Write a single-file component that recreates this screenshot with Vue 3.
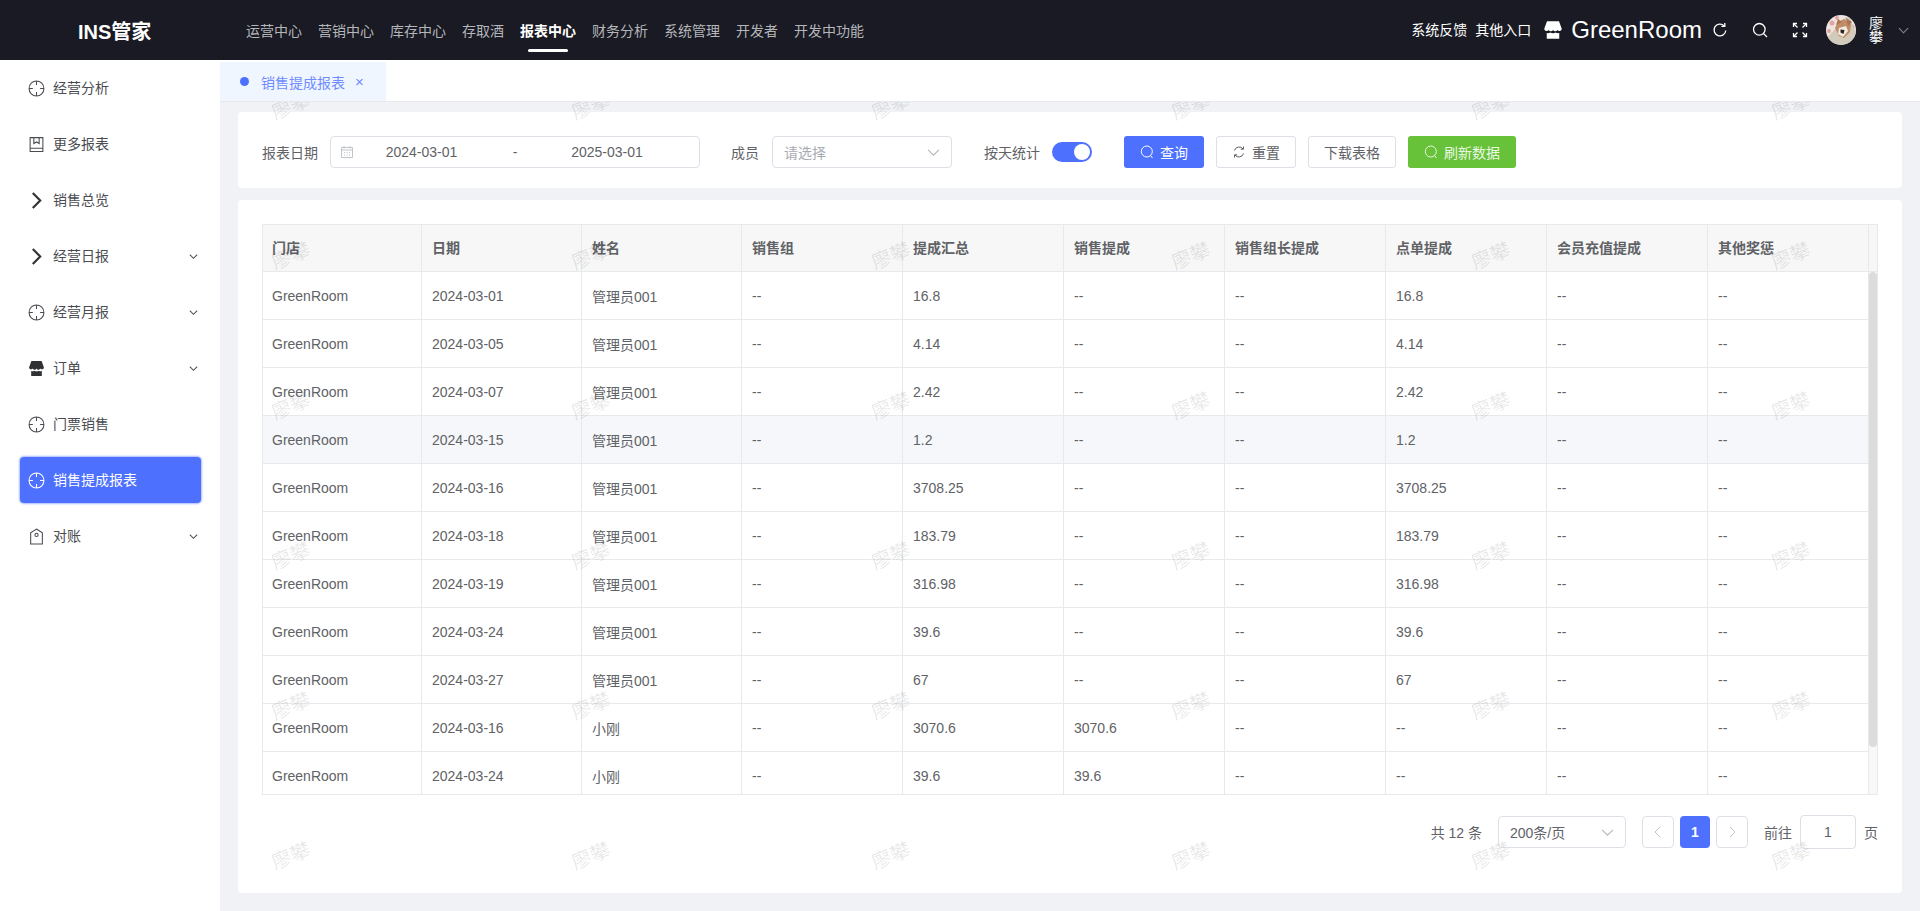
<script setup>
const navItems = ["运营中心", "营销中心", "库存中心", "存取酒", "报表中心", "财务分析", "系统管理", "开发者", "开发中功能"];

const icons = {
  target: "M8 1a7 7 0 1 0 0 14a7 7 0 1 0 0-14Z M8 1v3.6 M8 11.4V15 M1 8h3.6 M11.4 8H15",
  book: "M2 1.5h12v13H2z M2 11.6h12 M5.5 1.5v5.6L8 5.6l2.5 1.5V1.5",
  arrow: "M4.5 1 L11.5 8 L4.5 15",
  store: "M3.2 1h9.6L15 7a1.9 1.9 0 0 1-3.5.9a1.9 1.9 0 0 1-3.5 0a1.9 1.9 0 0 1-3.5 0A1.9 1.9 0 0 1 1 7Z M3 10.4c1.2.3 2.2 0 2.7-.4c1.3.8 3.3.8 4.6 0c.5.4 1.5.7 2.7.4V15H3Z",
  tag: "M8 1 L13.5 4.6 V15 H2.5 V4.6 Z M8 5a1.5 1.5 0 1 0 0 3a1.5 1.5 0 1 0 0-3Z",
};

const menu = [
  { label: "经营分析", icon: "target" },
  { label: "更多报表", icon: "book" },
  { label: "销售总览", icon: "arrow" },
  { label: "经营日报", icon: "arrow", sub: true },
  { label: "经营月报", icon: "target", sub: true },
  { label: "订单", icon: "store", sub: true },
  { label: "门票销售", icon: "target" },
  { label: "销售提成报表", icon: "target", active: true },
  { label: "对账", icon: "tag", sub: true },
];

const columns = ["门店", "日期", "姓名", "销售组", "提成汇总", "销售提成", "销售组长提成", "点单提成", "会员充值提成", "其他奖惩"];

const admin = "管理员001";
const rows = [
  ["2024-03-01", admin, "16.8", "--", "16.8"],
  ["2024-03-05", admin, "4.14", "--", "4.14"],
  ["2024-03-07", admin, "2.42", "--", "2.42"],
  ["2024-03-15", admin, "1.2", "--", "1.2"],
  ["2024-03-16", admin, "3708.25", "--", "3708.25"],
  ["2024-03-18", admin, "183.79", "--", "183.79"],
  ["2024-03-19", admin, "316.98", "--", "316.98"],
  ["2024-03-24", admin, "39.6", "--", "39.6"],
  ["2024-03-27", admin, "67", "--", "67"],
  ["2024-03-16", "小刚", "3070.6", "3070.6", "--"],
  ["2024-03-24", "小刚", "39.6", "39.6", "--"],
].map((r) => ["GreenRoom", r[0], r[1], "--", r[2], r[3], "--", r[4], "--", "--"]);

const hoverRow = 3;
const watermarks = Array.from({ length: 36 }, (_, i) => i);
</script>

<template>
  <div class="app">
    <header class="topbar">
      <div class="logo">INS管家</div>
      <nav class="nav">
        <span v-for="item in navItems" :key="item" class="nav-item" :class="{ current: item === '报表中心' }">{{ item }}</span>
      </nav>
      <div class="top-right">
        <span class="top-link">系统反馈</span>
        <span class="top-link second">其他入口</span>
        <svg class="store-icon" viewBox="0 0 16 16"><path :d="icons.store" fill="#fff" /></svg>
        <span class="store-name">GreenRoom</span>
        <svg class="top-icon refresh" viewBox="0 0 16 16" fill="none" stroke="#fff" stroke-width="1.3">
          <path d="M13.8 8.5A5.9 5.9 0 1 1 12 3.7" />
          <path d="M12.8 1v3.4H9.4" />
        </svg>
        <svg class="top-icon" viewBox="0 0 16 16" fill="none" stroke="#fff" stroke-width="1.3">
          <circle cx="7.3" cy="7.3" r="5.8" />
          <path d="M11.5 11.5L15 15" />
        </svg>
        <svg class="top-icon" viewBox="0 0 16 16" fill="none" stroke="#fff" stroke-width="1.3">
          <path d="M1.5 5V1.5H5 M11 1.5h3.5V5 M14.5 11v3.5H11 M5 14.5H1.5V11" />
          <path d="M2 2l3.5 3.5 M14 2l-3.5 3.5 M14 14l-3.5-3.5 M2 14l3.500-3.5" />
        </svg>
        <svg class="avatar" viewBox="0 0 30 30">
          <defs><clipPath id="avatar-clip"><circle cx="15" cy="15" r="15" /></clipPath></defs>
          <g clip-path="url(#avatar-clip)">
            <rect width="30" height="30" fill="#efe4e0" />
            <circle cx="6" cy="8" r="2.5" fill="#dfa5a2" />
            <circle cx="11" cy="3" r="2" fill="#dfa5a2" />
            <circle cx="26" cy="12" r="2.5" fill="#dfa5a2" />
            <circle cx="3" cy="16" r="2" fill="#dfa5a2" />
            <path d="M0 24L20 2L24 3L30 18V30H0Z" fill="#d2cabb" />
            <path d="M12 7L18 4L25 9L24 17L18 23L13 21L9 13Z" fill="#c08d66" />
            <path d="M13 13L20 11L22 16L17 22L12 19Z" fill="#f3ebdf" />
            <path d="M14.5 14.5l4 .5l-1 4l-3-1.5Z" fill="#2a2220" />
            <path d="M10 10l2-6l4 3Z M20 3l6 4l-4 4Z" fill="#a9764f" />
          </g>
        </svg>
        <span class="user-name">廖攀</span>
        <svg class="top-chevron" viewBox="0 0 12 12" fill="none" stroke="#8a8b92" stroke-width="1.1"><path d="M1 3.5L6 8.5L11 3.5" /></svg>
      </div>
    </header>

    <div class="layout">
      <aside class="sidebar">
        <div v-for="item in menu" :key="item.label" class="menu-item" :class="{ active: item.active }">
          <svg class="menu-icon" :class="'icon-' + item.icon" viewBox="0 0 16 16"><path :d="icons[item.icon]" /></svg>
          <span class="menu-label">{{ item.label }}</span>
          <svg v-if="item.sub" class="menu-chevron" viewBox="0 0 12 12" fill="none" stroke="currentColor" stroke-width="1.1"><path d="M2 4L6 8L10 4" /></svg>
        </div>
      </aside>

      <main class="main">
        <div class="tabs">
          <div class="tab">
            <i class="tab-dot"></i>
            <span>销售提成报表</span>
            <span class="tab-close">×</span>
          </div>
        </div>

        <div class="content">
          <section class="card filter">
            <label class="field-label">报表日期</label>
            <div class="range input-box">
              <svg class="calendar" viewBox="0 0 14 14" fill="none" stroke="#c0c4cc"><path d="M1.5 2.5h11v10h-11z M1.5 5h11 M4 1v2.5 M10 1v2.5 M4 7.5h1 M6.5 7.5h1 M9 7.5h1 M4 10h1 M6.5 10h1 M9 10h1" /></svg>
              <span class="date start">2024-03-01</span>
              <span class="date sep">-</span>
              <span class="date end">2025-03-01</span>
            </div>
            <label class="field-label member">成员</label>
            <div class="select input-box">
              <span class="placeholder">请选择</span>
              <svg class="select-chevron" viewBox="0 0 12 12" fill="none" stroke="#b4b7bd" stroke-width="1"><path d="M1 3.5L6 8.5L11 3.5" /></svg>
            </div>
            <label class="field-label daily">按天统计</label>
            <div class="switch"><i></i></div>
            <button class="btn primary">
              <svg class="btn-icon" viewBox="0 0 14 14" fill="none" stroke="currentColor"><circle cx="6.8" cy="6.5" r="5.5" /><path d="M10.5 10.5L12.5 13" /></svg>
              查询
            </button>
            <button class="btn plain">
              <svg class="btn-icon" viewBox="0 0 14 14" fill="none" stroke="#606266"><path d="M2.5 5.5A4.8 4.8 0 0 1 11 4 M11.5 8.5A4.8 4.8 0 0 1 3 10" /><path d="M11.5 1.5V4.2H8.8 M2.5 12.5V9.8H5.2" /></svg>
              重置
            </button>
            <button class="btn plain download">下载表格</button>
            <button class="btn success">
              <svg class="btn-icon" viewBox="0 0 14 14" fill="none" stroke="currentColor"><circle cx="6.8" cy="6.5" r="5.5" /><path d="M10.5 10.5L12.5 13" /></svg>
              刷新数据
            </button>
          </section>

          <section class="card list">
            <div class="table">
              <div class="thead">
                <div class="grid-row">
                  <div v-for="col in columns" :key="col" class="cell head-cell">{{ col }}</div>
                </div>
                <div class="gutter"></div>
              </div>
              <div class="tbody">
                <div class="rows">
                  <div v-for="(row, i) in rows" :key="i" class="grid-row body-row" :class="{ hover: i === hoverRow }">
                    <div v-for="(val, j) in row" :key="j" class="cell">{{ val }}</div>
                  </div>
                </div>
                <div class="scrollbar"><div class="thumb"></div></div>
              </div>
            </div>

            <div class="pager">
              <span class="total">共 12 条</span>
              <div class="page-size input-box">
                <span>200条/页</span>
                <svg class="select-chevron" viewBox="0 0 12 12" fill="none" stroke="#b4b7bd" stroke-width="1"><path d="M1 3.5L6 8.5L11 3.5" /></svg>
              </div>
              <button class="page-btn prev"><svg viewBox="0 0 12 12" fill="none" stroke="#c0c4cc"><path d="M8 1L3 6L8 11" /></svg></button>
              <button class="page-num">1</button>
              <button class="page-btn next"><svg viewBox="0 0 12 12" fill="none" stroke="#c0c4cc"><path d="M4 1L9 6L4 11" /></svg></button>
              <span class="goto">前往</span>
              <div class="jump input-box">1</div>
              <span class="page-word">页</span>
            </div>
          </section>

          <div class="watermark">
            <div class="watermark-grid">
              <div v-for="n in watermarks" :key="n" class="mark"><span>廖攀</span></div>
            </div>
          </div>
        </div>
      </main>
    </div>
  </div>
</template>

<style>
html,
body {
  margin: 0;
  height: 100%;
  overflow: hidden;
}
</style>

<style scoped>
.app {
  height: 911px;
  display: flex;
  flex-direction: column;
  font-family: "Liberation Sans", "Noto Sans CJK SC", sans-serif;
  font-size: 14px;
  color: #606266;
}

/* top bar */
.topbar {
  height: 60px;
  flex: none;
  display: flex;
  align-items: center;
  background: #191a23;
  color: #fff;
}
.logo {
  width: 220px;
  box-sizing: border-box;
  padding-left: 78px;
  font-size: 20px;
  font-weight: 700;
}
.nav {
  display: flex;
  gap: 16px;
  padding-left: 26px;
  height: 100%;
  align-items: center;
}
.nav-item {
  position: relative;
  color: #b5b6ba;
}
.nav-item.current {
  color: #fff;
  font-weight: 700;
}
.nav-item.current::after {
  content: "";
  position: absolute;
  left: 8px;
  right: 8px;
  top: 29px;
  height: 3px;
  border-radius: 2px;
  background: #fff;
}
.top-right {
  margin-left: auto;
  display: flex;
  align-items: center;
  padding-right: 11px;
}
.top-link {
  margin-top: -2px;
}
.top-link.second {
  margin-left: 8px;
}
.store-icon {
  width: 20px;
  height: 20px;
  margin-left: 12px;
}
.store-name {
  margin-left: 8px;
  font-size: 24px;
}
.top-icon {
  width: 16px;
  height: 16px;
  margin-left: 24px;
}
.top-icon.refresh {
  margin-left: 10px;
}
.avatar {
  width: 30px;
  height: 30px;
  margin-left: 18px;
}
.user-name {
  width: 14px;
  margin-left: 13px;
  line-height: 14px;
}
.top-chevron {
  width: 11px;
  height: 11px;
  margin-left: 15px;
}

.layout {
  flex: 1;
  display: flex;
  min-height: 0;
}

/* side menu */
.sidebar {
  width: 220px;
  flex: none;
  box-sizing: border-box;
  padding: 5px 19px 0 20px;
  display: flex;
  flex-direction: column;
  gap: 10px;
  background: #fff;
}
.menu-item {
  height: 46px;
  flex: none;
  padding: 0 8px;
  box-sizing: border-box;
  display: flex;
  align-items: center;
  border-radius: 4px;
  color: #4a4c52;
}
.menu-item.active {
  background: #4d70ff;
  color: #fff;
  box-shadow: 0 0 2px 1px #a9b9ff;
}
.menu-icon {
  width: 17px;
  height: 17px;
  flex: none;
  fill: none;
  stroke: currentColor;
  stroke-width: 1;
}
.icon-arrow {
  stroke: #303133;
  stroke-width: 2;
}
.icon-store {
  fill: #303133;
  stroke: none;
}
.menu-label {
  margin-left: 8px;
  margin-top: -2px;
}
.menu-chevron {
  width: 11px;
  height: 11px;
  margin-left: auto;
  margin-right: -6px;
}

/* tab strip */
.main {
  flex: 1;
  min-width: 0;
  display: flex;
  flex-direction: column;
  background: #f0f2f6;
}
.tabs {
  height: 42px;
  flex: none;
  box-sizing: border-box;
  padding-top: 2px;
  background: #fff;
  border-bottom: 1px solid #e8e9ec;
}
.tab {
  width: 166px;
  height: 39px;
  box-sizing: border-box;
  padding-left: 20px;
  display: flex;
  align-items: center;
  background: #eff6ff;
  color: #6f8bff;
}
.tab-dot {
  width: 9px;
  height: 9px;
  margin-right: 12px;
  border-radius: 50%;
  background: #4d70ff;
}
.tab-close {
  margin-left: 10px;
  font-size: 15px;
  line-height: 1;
}

/* content area */
.content {
  flex: 1;
  min-height: 0;
  position: relative;
  padding: 10px 18px 18px;
  display: flex;
  flex-direction: column;
  gap: 12px;
  overflow: hidden;
}
.card {
  background: #fff;
  border-radius: 4px;
  box-sizing: border-box;
}
.filter {
  height: 76px;
  flex: none;
  padding: 4px 24px 0;
  display: flex;
  align-items: center;
}
.field-label {
  margin-right: 12px;
}
.field-label.member {
  margin-left: 31px;
  margin-right: 13px;
}
.field-label.daily {
  margin-left: 32px;
}
.input-box {
  height: 32px;
  box-sizing: border-box;
  border: 1px solid #dcdfe6;
  border-radius: 4px;
  display: flex;
  align-items: center;
}
.range {
  width: 370px;
  padding-left: 9px;
}
.calendar {
  width: 14px;
  height: 14px;
  flex: none;
}
.date {
  text-align: center;
}
.date.start {
  width: 135px;
}
.date.sep {
  width: 52px;
}
.date.end {
  width: 132px;
}
.select {
  width: 180px;
  padding: 0 11px;
  justify-content: space-between;
}
.placeholder {
  color: #a8abb2;
}
.select-chevron {
  width: 13px;
  height: 13px;
}
.switch {
  width: 40px;
  height: 20px;
  flex: none;
  box-sizing: border-box;
  padding: 2px;
  display: flex;
  justify-content: flex-end;
  border-radius: 10px;
  background: #4d70ff;
}
.switch i {
  width: 16px;
  height: 16px;
  border-radius: 50%;
  background: #fff;
}
.btn {
  height: 32px;
  flex: none;
  padding: 0;
  box-sizing: border-box;
  display: flex;
  align-items: center;
  justify-content: center;
  gap: 6px;
  border: 1px solid transparent;
  border-radius: 3px;
  font: inherit;
}
.btn-icon {
  width: 14px;
  height: 14px;
}
.btn.primary {
  width: 80px;
  margin-left: 32px;
  background: #4d70ff;
  color: #fff;
}
.btn.plain {
  width: 80px;
  margin-left: 12px;
  background: #fff;
  border-color: #dcdfe6;
  color: #606266;
}
.btn.download {
  width: 88px;
}
.btn.success {
  width: 108px;
  margin-left: 12px;
  background: #67c23a;
  color: #e9f7e1;
}

/* table */
.list {
  flex: 1;
  min-height: 0;
  padding: 24px;
}
.table {
  height: 571px;
  box-sizing: border-box;
  border: 1px solid #e8e9ec;
  display: flex;
  flex-direction: column;
  overflow: hidden;
}
.thead {
  height: 47px;
  flex: none;
  display: flex;
  background: #f7f7f7;
}
.grid-row {
  display: grid;
  grid-template-columns: 159px 160px 160px repeat(7, 161px);
}
.cell {
  box-sizing: border-box;
  padding-left: 10px;
  height: 48px;
  display: flex;
  align-items: center;
  border-right: 1px solid #e8e9ec;
  border-bottom: 1px solid #e8e9ec;
}
.cell:first-child {
  padding-left: 9px;
}
.head-cell {
  height: 47px;
  padding-bottom: 2px;
  font-weight: 700;
}
.gutter {
  flex: 1;
  border-bottom: 1px solid #e8e9ec;
}
.tbody {
  flex: 1;
  min-height: 0;
  display: flex;
}
.rows {
  overflow: hidden;
}
.body-row.hover {
  background: #f5f7fa;
}
.scrollbar {
  flex: 1;
  background: #f8f8f8;
}
.thumb {
  height: 475px;
  border-radius: 4px;
  background: #dcdcdc;
}

/* pagination */
.pager {
  margin-top: 20px;
  height: 34px;
  display: flex;
  align-items: center;
  justify-content: flex-end;
}
.page-size {
  width: 128px;
  margin-left: 16px;
  padding: 0 11px;
  justify-content: space-between;
}
.page-btn,
.page-num {
  height: 32px;
  padding: 0;
  box-sizing: border-box;
  border-radius: 4px;
  font: inherit;
}
.page-btn {
  width: 32px;
  display: flex;
  align-items: center;
  justify-content: center;
  border: 1px solid #dcdfe6;
  background: #fff;
}
.page-btn svg {
  width: 12px;
  height: 12px;
}
.page-btn.prev {
  margin-left: 16px;
}
.page-num {
  width: 30px;
  margin: 0 6px;
  border: none;
  background: #4d70ff;
  color: #fff;
  font-weight: 700;
}
.goto {
  margin-left: 16px;
}
.jump {
  width: 56px;
  height: 34px;
  margin: 0 8px;
  justify-content: center;
}

/* watermark */
.watermark {
  position: absolute;
  inset: 0;
  overflow: hidden;
  pointer-events: none;
}
.watermark-grid {
  margin-top: -130px;
  display: grid;
  grid-template-columns: repeat(6, 300px);
  grid-auto-rows: 150px;
}
.mark {
  box-sizing: border-box;
  padding: 124px 0 0 51px;
}
.mark span {
  display: block;
  width: 40px;
  font-size: 20px;
  line-height: 20px;
  color: rgba(0, 0, 0, 0.1);
  transform: rotate(-22deg);
}
</style>
